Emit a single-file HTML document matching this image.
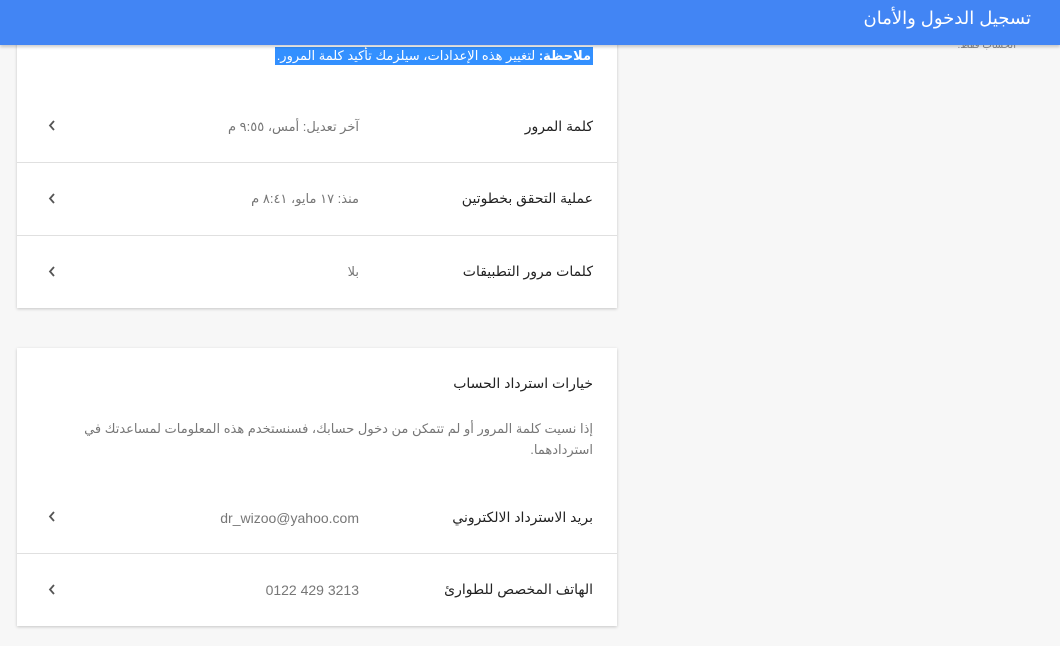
<!DOCTYPE html>
<html><head><meta charset="utf-8"><style>
body{margin:0;width:1060px;height:646px;background:#f7f7f7;font-family:"Liberation Sans","DejaVu Sans",sans-serif;overflow:hidden;position:relative}
.hdr{position:absolute;left:0;top:0;width:1060px;height:45px;background:#4285f4;box-shadow:0 2px 3px rgba(0,0,0,.2);z-index:2}
.hdr span{position:absolute;right:29px;top:8px;color:#fff;font-size:18px;direction:rtl}
.card{position:absolute;left:17px;width:600px;background:#fff;box-shadow:0 1px 3px rgba(0,0,0,.2)}
.t{position:absolute;direction:rtl;white-space:nowrap}
.row{position:absolute;left:0;width:600px;border-top:1px solid #e0e0e0}
.chev{position:absolute;left:30px;width:11px;height:11px}
.lab{right:24px;font-size:14px;color:#222}
.val{right:258px;font-size:13px;color:#777}
</style></head><body>
<div class="hdr"><span>تسجيل الدخول والأمان</span></div>
<div class="t" style="right:44px;top:40px;font-size:10px;color:#888">الحساب فقط.</div>
<div class="card" style="top:0;height:308px">
  <div class="t" style="right:24px;top:47px;font-size:13px;background:#3390ff;color:#fff;padding:1px 2px">
    <b>ملاحظة:</b> لتغيير هذه الإعدادات، سيلزمك تأكيد كلمة المرور.</div>
  <div class="t lab" style="top:118px">كلمة المرور</div>
  <div class="t val" style="top:119px">آخر تعديل: أمس، ٩:٥٥ م</div>
  <svg class="chev" style="top:120px" viewBox="0 0 11 11"><path d="M7 1L3 5.5L7 10" stroke="#555" stroke-width="1.8" fill="none"/></svg>
  <div class="row" style="top:162px"></div>
  <div class="t lab" style="top:190px">عملية التحقق بخطوتين</div>
  <div class="t val" style="top:191px">منذ: ١٧ مايو، ٨:٤١ م</div>
  <svg class="chev" style="top:193px" viewBox="0 0 11 11"><path d="M7 1L3 5.5L7 10" stroke="#555" stroke-width="1.8" fill="none"/></svg>
  <div class="row" style="top:235px"></div>
  <div class="t lab" style="top:263px">كلمات مرور التطبيقات</div>
  <div class="t val" style="top:264px">بلا</div>
  <svg class="chev" style="top:266px" viewBox="0 0 11 11"><path d="M7 1L3 5.5L7 10" stroke="#555" stroke-width="1.8" fill="none"/></svg>
</div>
<div class="card" style="top:348px;height:278px">
  <div class="t lab" style="top:27px">خيارات استرداد الحساب</div>
  <div class="t" style="right:24px;left:24px;top:70px;font-size:13px;color:#777;white-space:normal;line-height:21px">إذا نسيت كلمة المرور أو لم تتمكن من دخول حسابك، فسنستخدم هذه المعلومات لمساعدتك في استردادهما.</div>
  <div class="t lab" style="top:161px">بريد الاسترداد الالكتروني</div>
  <div class="t val" style="top:162px;font-size:14px">dr_wizoo@yahoo.com</div>
  <svg class="chev" style="top:163px" viewBox="0 0 11 11"><path d="M7 1L3 5.5L7 10" stroke="#555" stroke-width="1.8" fill="none"/></svg>
  <div class="row" style="top:205px"></div>
  <div class="t lab" style="top:233px">الهاتف المخصص للطوارئ</div>
  <div class="t val" style="top:234px;font-size:14px;direction:ltr">0122 429 3213</div>
  <svg class="chev" style="top:236px" viewBox="0 0 11 11"><path d="M7 1L3 5.5L7 10" stroke="#555" stroke-width="1.8" fill="none"/></svg>
</div>
</body></html>
